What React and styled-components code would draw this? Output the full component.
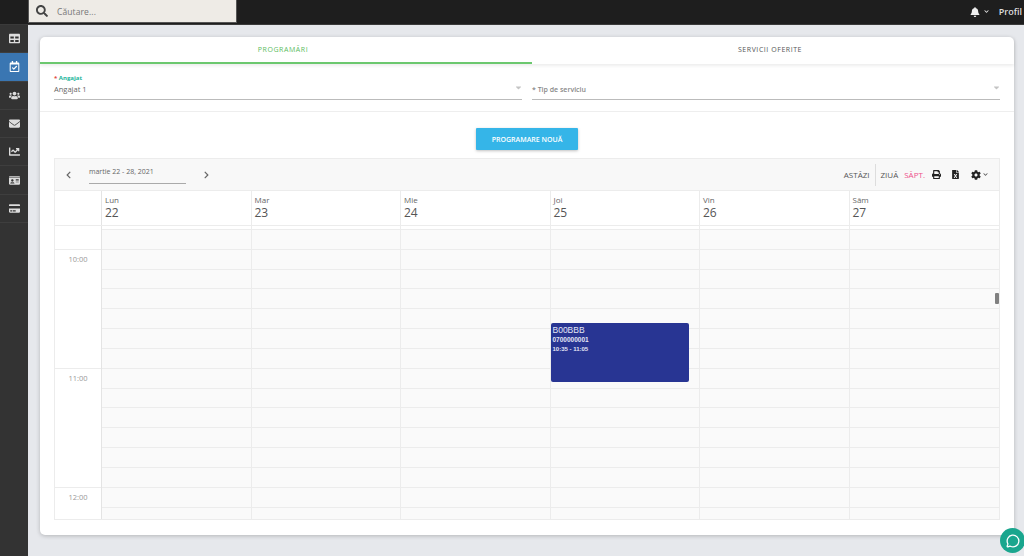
import styled, { createGlobalStyle } from "styled-components"
import { MessageCircle } from "lucide-react"
import {
  FaBell,
  FaCaretDown,
  FaChartLine,
  FaChevronDown,
  FaChevronLeft,
  FaChevronRight,
  FaCog,
  FaCreditCard,
  FaEnvelope,
  FaFileExcel,
  FaIdCard,
  FaPrint,
  FaRegCalendarCheck,
  FaSearch,
  FaTable,
  FaUsers,
} from "react-icons/fa"

const NAV_ICONS = [FaTable, FaRegCalendarCheck, FaUsers, FaEnvelope, FaChartLine, FaIdCard, FaCreditCard]

const DAYS = [
  { name: "Lun", date: 22 },
  { name: "Mar", date: 23 },
  { name: "Mie", date: 24 },
  { name: "Joi", date: 25, event: true },
  { name: "Vin", date: 26 },
  { name: "Sâm", date: 27 },
]

const SLOT_COUNT = 14

export default function App() {
  return (
    <Page>
      <GlobalStyle />
      <TopBar>
        <SearchBox>
          <FaSearch />
          <span>Căutare...</span>
        </SearchBox>
        <TopActions>
          <FaBell size={10} />
          <FaChevronDown size={5} />
          <ProfileLink>Profil</ProfileLink>
        </TopActions>
      </TopBar>

      <Body>
        <Sidebar>
          {NAV_ICONS.map((Icon, i) => (
            <NavItem key={i} $active={i === 1}>
              <Icon />
            </NavItem>
          ))}
        </Sidebar>

        <Main>
          <Card>
            <Tabs>
              <Tab $active>PROGRAMĂRI</Tab>
              <Tab>SERVICII OFERITE</Tab>
            </Tabs>

            <Filters>
              <Field>
                <FieldLabel>
                  <em>*</em> Angajat
                </FieldLabel>
                <FieldValue>Angajat 1</FieldValue>
                <Caret />
              </Field>
              <Field>
                <Placeholder>* Tip de serviciu</Placeholder>
                <Caret />
              </Field>
            </Filters>

            <ButtonRow>
              <PrimaryButton>PROGRAMARE NOUĂ</PrimaryButton>
            </ButtonRow>

            <Calendar>
              <Toolbar>
                <RangeNav>
                  <NavArrow>
                    <FaChevronLeft />
                  </NavArrow>
                  <RangeLabel>martie 22 - 28, 2021</RangeLabel>
                  <NavArrow>
                    <FaChevronRight />
                  </NavArrow>
                </RangeNav>
                <ToolActions>
                  <TodayButton>ASTĂZI</TodayButton>
                  <ViewButton>ZIUĂ</ViewButton>
                  <ViewButton $active>SĂPT.</ViewButton>
                  <ToolIcon>
                    <FaPrint />
                  </ToolIcon>
                  <ToolIcon>
                    <FaFileExcel />
                  </ToolIcon>
                  <SettingsIcon>
                    <FaCog />
                    <FaChevronDown />
                  </SettingsIcon>
                </ToolActions>
              </Toolbar>

              <HeaderRow>
                <TimeHeader />
                {DAYS.map((day) => (
                  <DayHeader key={day.name}>
                    <DayName>{day.name}</DayName>
                    <DayDate>{day.date}</DayDate>
                  </DayHeader>
                ))}
              </HeaderRow>

              <TimeGrid>
                <TimeColumn>
                  <TimeCell $lead />
                  <TimeCell>10:00</TimeCell>
                  <TimeCell>11:00</TimeCell>
                  <TimeCell>12:00</TimeCell>
                </TimeColumn>
                {DAYS.map((day) => (
                  <DayColumn key={day.name}>
                    <LeadSlot />
                    {Array.from({ length: SLOT_COUNT + 1 }, (_, i) => (
                      <Slot key={i} />
                    ))}
                    {day.event && (
                      <EventCard>
                        <EventTitle>B00BBB</EventTitle>
                        <EventPhone>0700000001</EventPhone>
                        <EventTime>10:35 - 11:05</EventTime>
                      </EventCard>
                    )}
                  </DayColumn>
                ))}
                <ScrollThumb />
              </TimeGrid>
            </Calendar>
          </Card>
        </Main>
      </Body>

      <ChatBubble>
        <MessageCircle strokeWidth={2.2} />
      </ChatBubble>
    </Page>
  )
}

const GlobalStyle = createGlobalStyle`
  html, body {
    margin: 0;
    padding: 0;
    height: 100%;
    overflow: hidden;
    background: #e6e8ec;
  }
  * {
    box-sizing: border-box;
  }
`

const Page = styled.div`
  width: 1024px;
  height: 556px;
  display: flex;
  flex-direction: column;
  font-family: "Open Sans", "Liberation Sans", sans-serif;
  color: #555;
  position: relative;
  overflow: hidden;
`

const TopBar = styled.header`
  height: 25px;
  flex-shrink: 0;
  background: #1e1e1e;
  border-bottom: 1px solid #3a3a3a;
  display: flex;
  justify-content: space-between;
  padding: 0 2px 0 28px;
`

const SearchBox = styled.div`
  width: 209px;
  height: 23px;
  background: #eeebe6;
  border: 1px solid #555;
  border-top: 0;
  display: flex;
  align-items: center;
  gap: 9px;
  padding-left: 7px;
  font-size: 8.5px;
  letter-spacing: 0.1px;
  color: #777;
  svg {
    width: 12px;
    height: 12px;
    color: #444;
  }
`

const TopActions = styled.div`
  display: flex;
  align-items: center;
  gap: 4px;
  color: #eee;
  height: 23px;
`

const ProfileLink = styled.span`
  font-size: 9px;
  font-weight: 600;
  margin-left: 6px;
  color: #ddd;
`

const Body = styled.div`
  flex: 1;
  display: flex;
  min-height: 0;
`

const Sidebar = styled.nav`
  width: 28px;
  flex-shrink: 0;
  background: #333;
`

const NavItem = styled.div`
  height: 28.3px;
  display: flex;
  align-items: center;
  justify-content: center;
  background: ${(p) => (p.$active ? "#3a76b2" : "transparent")};
  border-bottom: 1px solid #3e3e3e;
  color: ${(p) => (p.$active ? "#fff" : "#ddd")};
  svg {
    width: 11px;
    height: 11px;
  }
`

const Main = styled.main`
  flex: 1;
  padding: 12px 10px 21px 12px;
  min-width: 0;
`

const Card = styled.section`
  height: 498px;
  background: #fff;
  border-radius: 5px;
  box-shadow: 0 1px 4px rgba(0, 0, 0, 0.22);
  padding-bottom: 15px;
  display: flex;
  flex-direction: column;
`

const Tabs = styled.div`
  height: 27px;
  display: grid;
  grid-template-columns: 492px 1fr;
  box-shadow: 0 2px 3px rgba(0, 0, 0, 0.07);
  flex-shrink: 0;
`

const Tab = styled.div`
  display: flex;
  align-items: center;
  justify-content: center;
  padding-right: 6px;
  font-size: 7px;
  font-weight: 400;
  letter-spacing: 0.55px;
  color: ${(p) => (p.$active ? "#5cbc60" : "#555")};
  border-bottom: 2px solid ${(p) => (p.$active ? "#6cc86f" : "transparent")};
`

const Filters = styled.div`
  height: 48px;
  flex-shrink: 0;
  display: grid;
  grid-template-columns: 468px 468px;
  column-gap: 10px;
  padding: 0 14px;
  border-bottom: 1px solid #eeeeee;
`

const Field = styled.div`
  position: relative;
  height: 36px;
  border-bottom: 1px solid #bbb;
  font-size: 8px;
`

const FieldLabel = styled.div`
  position: absolute;
  top: 10px;
  left: 0;
  font-size: 6px;
  font-weight: 700;
  color: #22b59b;
  em {
    color: #e0483e;
    font-style: normal;
  }
`

const FieldValue = styled.div`
  position: absolute;
  top: 20px;
  left: 0;
  font-size: 7.5px;
  color: #666;
`

const Placeholder = styled(FieldValue)`
  top: 21px;
  font-size: 7px;
  font-weight: 600;
  color: #888;
`

const Caret = styled(FaCaretDown)`
  position: absolute;
  right: -1px;
  top: 19px;
  width: 9px;
  height: 9px;
  color: #c4c4c4;
`

const ButtonRow = styled.div`
  height: 46px;
  flex-shrink: 0;
  display: flex;
  align-items: center;
  justify-content: center;
  padding-top: 8px;
`

const PrimaryButton = styled.button`
  width: 102px;
  height: 22px;
  border: 0;
  border-radius: 1px;
  background: #35b5e8;
  box-shadow: 0 1px 3px rgba(0, 0, 0, 0.25);
  color: #fff;
  font-family: inherit;
  font-size: 7px;
  font-weight: 600;
  padding: 0;
`

const Calendar = styled.div`
  flex: 1;
  min-height: 0;
  margin: 0 14px;
  border: 1px solid #ececec;
  display: flex;
  flex-direction: column;
`

const Toolbar = styled.div`
  height: 32px;
  flex-shrink: 0;
  background: #f8f8f8;
  border-bottom: 1px solid #ececec;
  display: flex;
  align-items: center;
  justify-content: space-between;
  padding: 0 11px 0 10px;
`

const RangeNav = styled.div`
  display: flex;
  align-items: center;
`

const NavArrow = styled.span`
  width: 8px;
  display: flex;
  color: #666;
  svg {
    width: 7px;
    height: 8px;
  }
`

const RangeLabel = styled.div`
  width: 97px;
  height: 20px;
  margin: 0 17px 2px 16px;
  padding-top: 3px;
  border-bottom: 1px solid #aaa;
  font-size: 7px;
  color: #666;
`

const ToolActions = styled.div`
  display: flex;
  align-items: center;
  font-size: 8px;
  color: #555;
`

const TodayButton = styled.span`
  height: 22px;
  line-height: 22px;
  padding-right: 5px;
  margin-right: 5px;
  border-right: 1px solid #ddd;
`

const ViewButton = styled.span`
  margin-right: 6px;
  color: ${(p) => (p.$active ? "#ee4f8b" : "#555")};
`

const ToolIcon = styled.span`
  display: flex;
  width: 10px;
  margin-right: 9px;
  justify-content: center;
  color: #222;
  svg {
    width: 9px;
    height: 9px;
  }
`

const SettingsIcon = styled.span`
  display: flex;
  align-items: center;
  gap: 2px;
  margin-left: 2px;
  color: #222;
  svg:first-child {
    width: 10px;
    height: 10px;
  }
  svg:last-child {
    width: 5px;
    height: 5px;
    color: #555;
  }
`

const HeaderRow = styled.div`
  height: 35px;
  flex-shrink: 0;
  display: grid;
  grid-template-columns: 47px repeat(6, 1fr);
  border-bottom: 1px solid #ececec;
`

const TimeHeader = styled.div`
  border-right: 1px solid #e4e4e4;
`

const DayHeader = styled.div`
  border-right: 1px solid #ececec;
  padding: 3px 0 0 3px;
  &:last-child {
    border-right: 0;
  }
`

const DayName = styled.div`
  font-size: 8px;
  line-height: 11px;
  color: #666;
`

const DayDate = styled.div`
  font-size: 12px;
  line-height: 16px;
  color: #555;
`

const TimeGrid = styled.div`
  flex: 1;
  min-height: 0;
  display: grid;
  grid-template-columns: 47px repeat(6, 1fr);
  overflow: hidden;
  position: relative;
`

const TimeColumn = styled.div`
  background: #fff;
  border-right: 1px solid #e4e4e4;
`

const TimeCell = styled.div`
  height: ${(p) => (p.$lead ? "23.5px" : "119px")};
  border-bottom: 1px solid #ececec;
  padding-top: 4px;
  text-align: center;
  font-size: 7.5px;
  color: #999;
`

const DayColumn = styled.div`
  position: relative;
  background: #fafafa;
  border-right: 1px solid #ececec;
  &:nth-child(7) {
    border-right: 0;
  }
`

const LeadSlot = styled.div`
  height: 4px;
  border-bottom: 1px solid #ececec;
  background: #fff;
`

const Slot = styled.div`
  height: 19.83px;
  border-bottom: 1px solid #ececec;
`

const EventCard = styled.div`
  position: absolute;
  top: 97px;
  left: 0;
  width: 138px;
  height: 59px;
  background: #283593;
  border-radius: 2px;
  padding: 2px 2px;
  color: #e4e6f5;
  font-family: "Liberation Sans", Arial, sans-serif;
`

const EventTitle = styled.div`
  font-size: 8.5px;
  line-height: 10px;
`

const EventPhone = styled.div`
  font-size: 6.5px;
  font-weight: 600;
  line-height: 9px;
  margin-top: 0;
`

const EventTime = styled.div`
  font-size: 6px;
  font-weight: 600;
  line-height: 9px;
  margin-top: 1px;
`

const ScrollThumb = styled.div`
  position: absolute;
  right: 0;
  top: 67px;
  width: 4px;
  height: 11px;
  border-radius: 1px;
  background: #808080;
`

const ChatBubble = styled.div`
  position: absolute;
  right: -1px;
  bottom: 3px;
  width: 25px;
  height: 25px;
  border-radius: 50%;
  background: #1aa68e;
  color: #fff;
  display: flex;
  align-items: center;
  justify-content: center;
  svg {
    width: 14px;
    height: 14px;
  }
`
